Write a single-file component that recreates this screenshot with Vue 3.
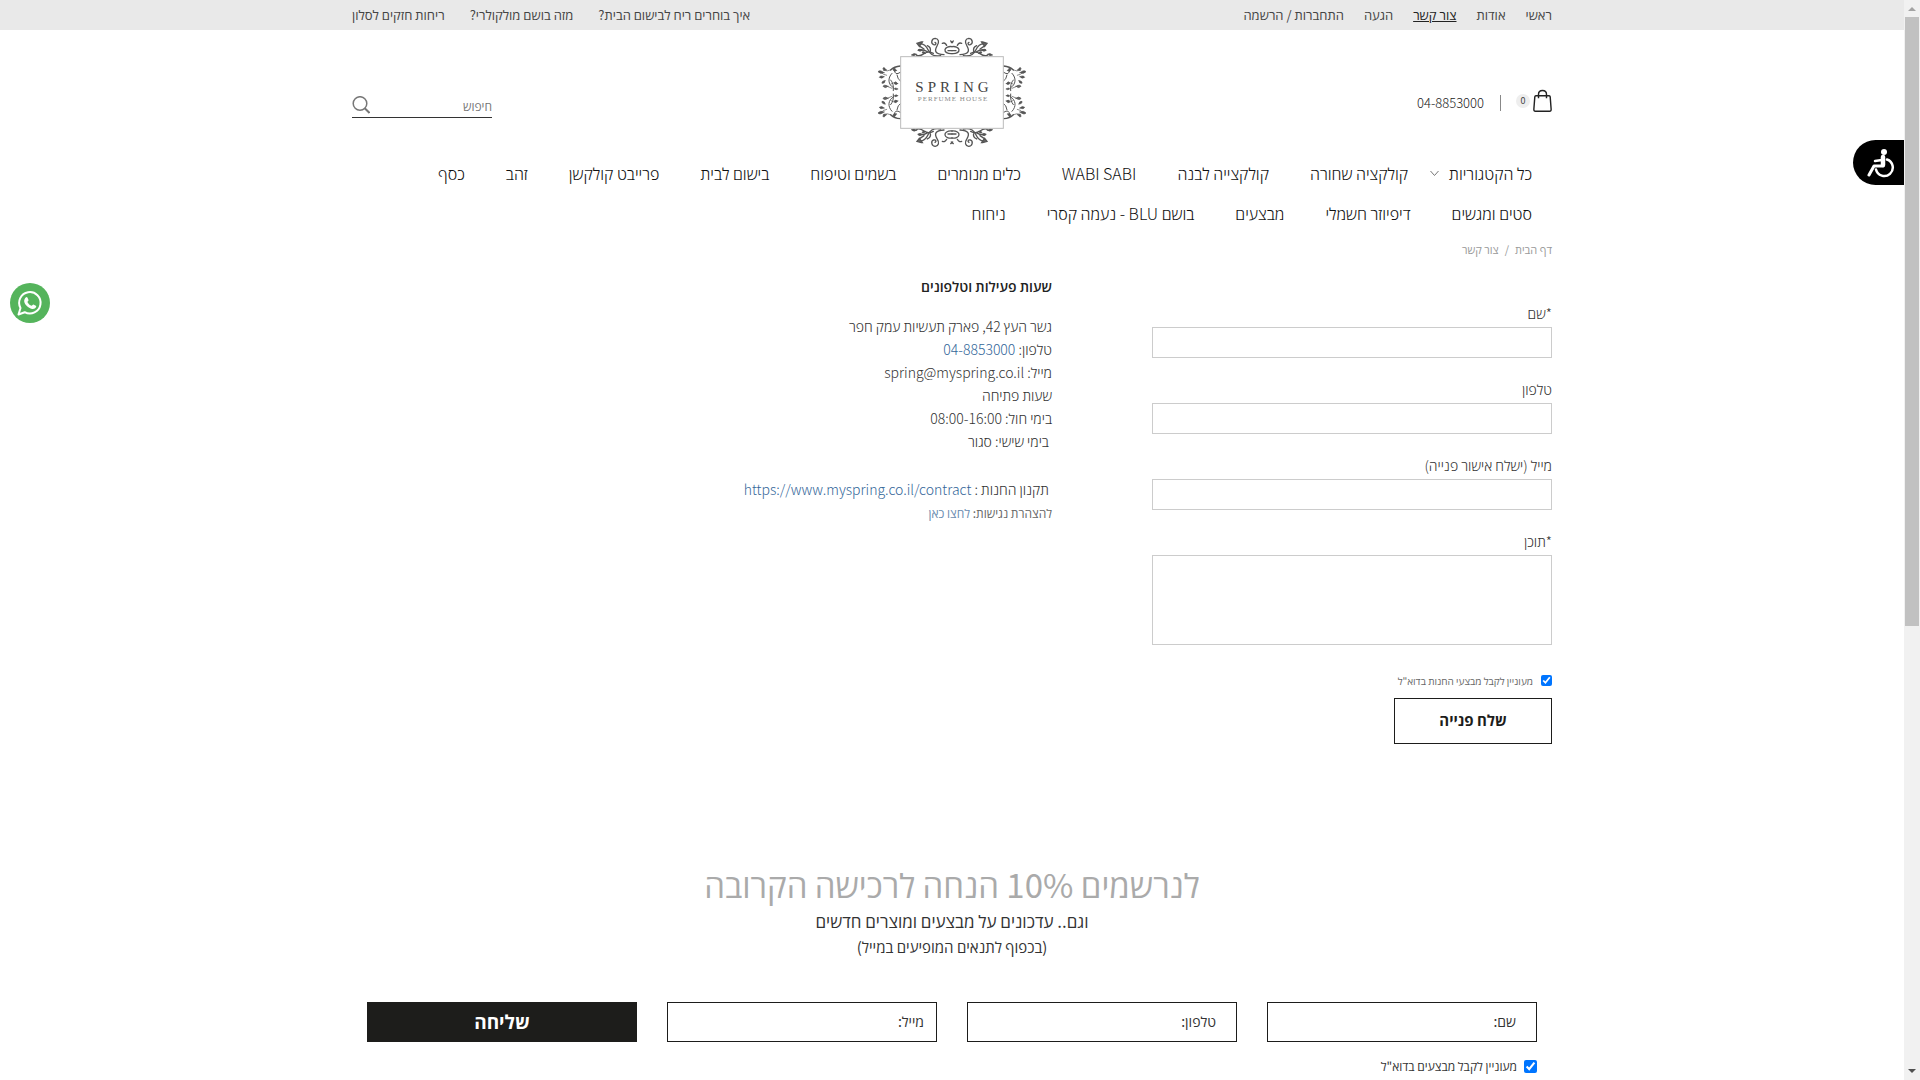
<script setup>
import { ref } from 'vue'

const topLinks = [
  { text: 'ראשי' },
  { text: 'אודות' },
  { text: 'צור קשר', current: true },
  { text: 'הגעה' },
  { text: 'התחברות / הרשמה' },
]
const articles = ['איך בוחרים ריח לבישום הבית?', 'מזה בושם מולקולרי?', 'ריחות חזקים לסלון']
const categories = [
  'כל הקטגוריות', 'קולקציה שחורה', 'קולקצייה לבנה', 'WABI SABI', 'כלים מנומרים',
  'בשמים וטיפוח', 'בישום לבית', 'פרייבט קולקשן', 'זהב', 'כסף',
  'סטים ומגשים', 'דיפיוזר חשמלי', 'מבצעים', 'בושם BLU - נעמה קסרי', 'ניחוח',
]
const fields = [
  { id: 'name', label: '*שם', type: 'text' },
  { id: 'phone', label: 'טלפון', type: 'tel' },
  { id: 'email', label: 'מייל (ישלח אישור פנייה)', type: 'email' },
]
const newsFields = [
  { id: 'news-name', label: 'שם:', type: 'text' },
  { id: 'news-phone', label: 'טלפון:', type: 'tel' },
  { id: 'news-email', label: 'מייל:', type: 'email' },
]
const wantsOffers = ref(true)
const wantsNews = ref(true)
const corners = ['', 'matrix(-1 0 0 1 612 0)', 'matrix(1 0 0 -1 0 434)', 'matrix(-1 0 0 -1 612 434)']
</script>

<template>
  <div class="page" dir="rtl">
    <div class="topbar">
      <div class="container topbar-row">
        <nav class="top-links">
          <a v-for="l in topLinks" :key="l.text" href="#" :class="{ current: l.current }">{{ l.text }}</a>
        </nav>
        <nav class="articles">
          <a v-for="a in articles" :key="a" href="#">{{ a }}</a>
        </nav>
      </div>
    </div>

    <header class="container header">
      <div class="tools">
        <a href="#" class="cart" aria-label="סל קניות">
          <svg width="19" height="24" viewBox="0 0 20 24" fill="none" stroke="#222" stroke-width="1.5">
            <path d="M3 6.500h14c.8 0 1 .5 1.100 1.200l1 13c.1 1.300-.5 2-1.600 2h-15c-1.100 0-1.700-.7-1.600-2l1-13C2 7 2.200 6.500 3 6.500z" />
            <path d="M5.800 9V5c0-2.500 1.600-4 4.200-4s4.200 1.500 4.200 4v4" />
          </svg>
          <span class="count">0</span>
        </a>
        <a href="#" class="tel">04-8853000</a>
      </div>
      <a href="#" class="logo" aria-label="Spring Perfume House">
        <svg width="152" height="112" viewBox="0 0 152 112">
          <g transform="scale(.3333) translate(-78 -48)">
            <g v-for="c in corners" :key="c" :transform="c" fill="none" stroke="#555" stroke-width="4" stroke-linecap="round">
              <path d="M306 80c9-2 20 2 21 9s-7 13-21 12M306 92h12M308 68l-6-5M322 76q5-10 13-6" />
              <path d="M330 104c28-2 29-12 21-26-8-12-5-22 5-23 11 0 15 15 5 19-7 2-9-5-4-7" />
              <path d="M340 107c22 4 32-5 37-16 6-13 15-21 27-20" />
              <path d="M362 100q15-8 28 1t22 5M372 97q-5-15 8-20M378 96q15-9 28-6" />
              <path d="M395 66l9 13 7-9-13-4zM402 79l-12 8" fill="#666" />
              <path d="M395 91q8-8 14 0-7 6-14 0zM412 103q8-6 16 2-8 5-16-2zM386 100q2-8 10-4-1 7-10 4z" fill="#555" stroke-width="2" />
              <path d="M461 138c12 1 22 5 29 12" />
              <path d="M486 160c14 14 12 34-4 43" stroke-width="3" />
              <path d="M461 157q17 12 18-8M471 165q-2 14-10 18M482 212c-2-14 2-25 8-32" stroke-width="3" />
              <path d="M490 150q9 5 22 1M502 166q12-1 18-11M489 192l-14-6M486 205l19-8" stroke-width="2" />
              <path d="M503 150q8-11 10-5 0 9-10 5zM510 158q12-10 18-3-7 9-18 3zM510 170q11-5 14 2-8 6-14-2zM507 182q10 0 9 8-9 1-9-8zM469 191q5-9 11-1-5 7-11 1zM469 207q8-6 10 0-6 5-10 0zM473 152q5-13 10-5-1 10-10 5z" fill="#555" stroke-width="2" />
              <path d="M498 199q12-7 15 0-7 8-15 0z" fill="#666" stroke-width="2" />
            </g>
            <rect x="152" y="110" width="308" height="215" fill="#fff" stroke="#bbb" stroke-width="3" />
          </g>
          <text x="78" y="56" class="logo-name">SPRING</text>
          <text x="77" y="65" class="logo-sub">PERFUME HOUSE</text>
        </svg>
      </a>
      <form class="search" @submit.prevent>
        <input type="search" placeholder="חיפוש" aria-label="חיפוש">
        <button type="submit" aria-label="חפש">
          <svg width="18" height="18" viewBox="0 0 18 18" fill="none" stroke="#777" stroke-width="1.500">
            <circle cx="8" cy="7.500" r="6.800" /><path d="M12.500 12l5 5" stroke-width="2" />
          </svg>
        </button>
      </form>
    </header>

    <nav class="container categories">
      <a v-for="(c, i) in categories" :key="c" href="#">
        {{ c }}
        <svg v-if="i === 0" class="chevron" width="9" height="7" viewBox="0 0 9 7" fill="none" stroke="#777"><path d="M.5 1l4 4.500 4-4.500" /></svg>
      </a>
    </nav>

    <main>
      <div class="container">
        <div class="crumbs"><a href="#">דף הבית</a><span>/</span><span>צור קשר</span></div>
        <div class="contact">
          <form class="contact-form" @submit.prevent>
            <div v-for="f in fields" :key="f.id" class="field">
              <label :for="f.id">{{ f.label }}</label>
              <input :id="f.id" :type="f.type">
            </div>
            <div class="field">
              <label for="content">*תוכן</label>
              <textarea id="content"></textarea>
            </div>
            <label class="check offers"><input v-model="wantsOffers" type="checkbox">מעוניין לקבל מבצעי החנות בדוא"ל</label>
            <button type="submit" class="send">שלח פנייה</button>
          </form>
          <section class="info">
            <h2>שעות פעילות וטלפונים</h2>
            <p>גשר העץ 42, פארק תעשיות עמק חפר</p>
            <p>טלפון: <a href="#">04-8853000</a></p>
            <p>מייל: spring@myspring.co.il</p>
            <p>שעות פתיחה</p>
            <p>בימי חול: <bdi>08:00-16:00</bdi></p>
            <p>&nbsp;בימי שישי: סגור</p>
            <p class="terms">&nbsp;תקנון החנות : <a href="#"><bdi>https://www.myspring.co.il/contract</bdi></a></p>
            <p class="small">להצהרת נגישות: <a href="#">לחצו כאן</a></p>
          </section>
        </div>
      </div>
    </main>

    <section class="container newsletter">
      <h2>לנרשמים 10% הנחה לרכישה הקרובה</h2>
      <p class="lead">וגם.. עדכונים על מבצעים ומוצרים חדשים</p>
      <p class="note">(בכפוף לתנאים המופיעים במייל)</p>
      <form @submit.prevent>
        <div class="news-row">
          <input v-for="f in newsFields" :id="f.id" :key="f.id" :type="f.type" :placeholder="f.label" :aria-label="f.label">
          <button type="submit">שליחה</button>
        </div>
        <label class="check news-check"><input v-model="wantsNews" type="checkbox">מעוניין לקבל מבצעים בדוא"ל</label>
      </form>
    </section>

    <button class="access" aria-label="נגישות">
      <svg width="28" height="30" viewBox="0 0 28 30" fill="none" stroke="#fff" stroke-linecap="round" stroke-linejoin="round">
        <circle cx="17" cy="4" r="3" fill="#fff" stroke="none" />
        <path d="M16 9v8" stroke-width="4.500" />
        <path d="M15 12l-7 1" stroke-width="2.500" />
        <path d="M16 18H7l-5 9" stroke-width="3" />
        <path d="M20 11.500a8.500 8.500 0 1 1-11 10" stroke-width="2.500" />
      </svg>
    </button>
    <a href="#" class="whatsapp" aria-label="WhatsApp">
      <svg width="40" height="40" viewBox="0 0 40 40">
        <circle cx="20" cy="20" r="20" fill="#55b45c" />
        <path d="M8.500 31.500l2-6.500a10.700 10.700 0 1 1 4.200 4.200z" fill="none" stroke="#fff" stroke-width="2" stroke-linejoin="round" />
        <path d="M16.300 14.200c.6-.2 1 0 1.200.5l1 2.300c.2.600-.8 1.500-1.100 1.900 1 2 2.400 3.100 4.300 3.900.6-.5 1.200-1.500 1.700-1.300l2.400 1.200c.5.200.5.600.3 1.300-.6 1.600-2.400 2.200-4 1.900-4-.8-7.300-4.100-7.900-7.300-.2-1.700.7-4 2.100-4.400z" fill="#fff" />
      </svg>
    </a>
    <div class="scrollbar" aria-hidden="true">
      <svg width="8" height="5" viewBox="0 0 8 5"><path d="M0 5l4-4 4 4z" fill="#a3a3a3" /></svg>
      <div class="thumb"></div>
      <svg width="8" height="5" viewBox="0 0 8 5"><path d="M0 0l4 4 4-4z" fill="#505050" /></svg>
    </div>
  </div>
</template>

<style>
body { margin: 0; background: #fff; }
</style>

<style scoped>
* { box-sizing: border-box; }
.page {
  padding-right: 16px;
  font-family: "Noto Sans CJK JP", "Open Sans", sans-serif;
  font-size: 14px;
  font-weight: 400;
  color: #444;
}
a { color: inherit; text-decoration: none; }
h2, p { margin: 0; }
input, textarea, button { font: inherit; color: inherit; border-radius: 0; }
button { cursor: pointer; padding: 0; }
.container { width: 100%; max-width: 1200px; margin: 0 auto; }

.topbar { background: #e9e9e9; }
.topbar-row { display: flex; justify-content: space-between; line-height: 30px; font-size: 13px; }
.top-links { display: flex; gap: 20px; }
.articles { display: flex; gap: 25px; }
.current { color: #222; text-decoration: underline; }

.header { display: grid; grid-template-columns: 1fr auto 1fr; padding-top: 6px; height: 123px; }
.tools { display: flex; align-items: center; height: 24px; margin-top: 53px; }
.cart { display: flex; align-items: center; gap: 3px; }
.count { width: 14px; height: 14px; border-radius: 50%; background: #eee; font-size: 9px; line-height: 14px; text-align: center; }
.tel { margin-right: 15px; padding-right: 16px; border-right: 1px solid #888; font-size: 13px; font-weight: 300; line-height: 16px; margin-top: 3px; color: #222; }
.logo svg { display: block; }
.logo-name { font-family: "Liberation Serif", serif; font-size: 15px; letter-spacing: 4px; text-anchor: middle; fill: #444; direction: ltr; }
.logo-sub { font-family: "Liberation Serif", serif; font-size: 7px; letter-spacing: 1px; text-anchor: middle; fill: #888; direction: ltr; }
.search { justify-self: end; align-self: start; display: flex; align-items: center; width: 140px; height: 25px; margin-top: 57px; border-bottom: 1px solid #333; }
.search input { flex: 1; min-width: 0; padding: 0; border: 0; outline: 0; font-size: 12px; background: none; appearance: none; }
.search input::placeholder { color: #777; opacity: 1; }
.search button { border: 0; background: none; display: flex; }

.categories { display: flex; flex-wrap: wrap; column-gap: 41px; padding: 0 20px; line-height: 40px; font-size: 16px; font-weight: 300; color: #111; }
.categories a { position: relative; white-space: nowrap; }
.chevron { position: absolute; right: calc(100% + 10px); top: 17px; }

.crumbs { display: flex; gap: 6px; margin-top: 7px; line-height: 18px; font-size: 11px; color: #999; }
.contact { display: flex; align-items: flex-start; gap: 100px; }
.contact-form { width: 400px; padding-top: 41px; }
.field { display: flex; flex-direction: column; margin-bottom: 17px; }
.field label { line-height: 28px; font-weight: 300; color: #333; }
.field input, .field textarea { width: 100%; height: 31px; padding: 4px 8px; border: 1px solid #ccc; background: #fff; }
.field textarea { height: 90px; resize: none; display: block; }
.check { display: flex; align-items: center; }
.check input { margin: 0; flex: none; }
.offers { gap: 8px; height: 20px; margin-top: 25px; font-size: 10px; color: #666; }
.offers input { width: 11px; height: 11px; }
.send { display: block; width: 158px; height: 46px; margin-top: 8px; padding-bottom: 3px; border: 1px solid #1d1d1b; background: #fff; font-size: 15px; font-weight: 700; color: #1d1d1b; }
.info { padding-top: 17px; line-height: 23px; font-weight: 300; color: #333; }
.info h2 { margin-bottom: 17px; font-size: 14px; font-weight: 600; color: #222; }
.info a { color: #336699; }
.info .terms { margin-top: 25px; }
.info .small { line-height: 24px; font-size: 12px; font-weight: 400; color: #666; }
.info .small a { color: #6a8cb0; }

.newsletter { margin-top: 116px; padding: 0 15px 4px; text-align: center; color: #333; }
.newsletter h2 { font-size: 33px; font-weight: 400; line-height: 48px; color: #aaa; }
.lead { font-size: 17px; line-height: 26px; }
.note { font-size: 15px; line-height: 26px; }
.news-row { display: grid; grid-template-columns: repeat(4, 1fr); gap: 30px; margin-top: 42px; }
.news-row input, .news-row button { min-width: 0; height: 40px; border: 1px solid #1d1d1b; background: #fff; }
.news-row input { padding: 0 20px 2px; }
.news-row input[type="email"] { padding: 0 12px 2px; text-align: right; direction: rtl; }
.news-row input[type="tel"] { text-align: right; direction: rtl; }
.news-row input::placeholder { color: #333; opacity: 1; }
.news-row button { background: #1d1d1b; color: #fff; font-size: 19px; font-weight: 700; padding-bottom: 2px; }
.news-check { gap: 7px; height: 20px; margin-top: 14px; font-size: 12px; }
.news-check input { width: 13px; height: 13px; }

.access { position: fixed; top: 140px; right: 16px; width: 51px; height: 45px; display: flex; align-items: center; justify-content: center; padding-left: 4px; border: 0; border-radius: 23px 0 0 23px; background: #000; }
.whatsapp { position: fixed; left: 10px; top: 283px; width: 40px; height: 40px; }
.scrollbar { position: fixed; top: 0; right: 0; bottom: 0; width: 16px; padding: 6px 0; display: flex; flex-direction: column; align-items: center; background: #f1f1f1; }
.thumb { width: 14px; height: 57%; margin: 6px 0 auto; background: #c1c1c1; }
</style>
